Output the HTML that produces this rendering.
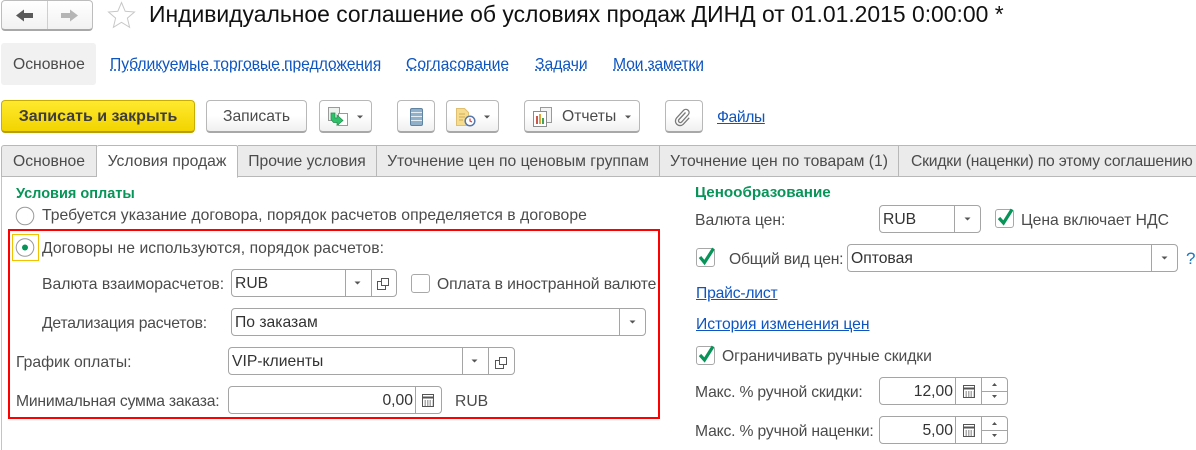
<!DOCTYPE html>
<html lang="ru"><head><meta charset="utf-8"><style>
html,body{margin:0;padding:0;background:#fff}
#p{position:relative;width:1196px;height:450px;overflow:hidden;background:#fff;font:15.7px/18px "Liberation Sans",sans-serif;color:#4b4b4b}
#p div,#p span.a{position:absolute;box-sizing:border-box;white-space:nowrap}
.t{line-height:18px;margin-top:1px}
.lk{color:#0f55c0;text-decoration:underline}
.dot{text-decoration:underline dotted #0f55c0}
.btn{background:linear-gradient(#fff,#fff 50%,#f0f0f0);border:1px solid #b8b8b8;border-bottom:2px solid #a8a8a8;border-radius:4px;height:33px;top:100px;text-align:center;line-height:32px}
.tab{top:145px;height:32px;background:#ebebeb;border:1px solid #b8b8b8;border-left:0;line-height:31px;text-align:center;color:#4b4b4b}
.f{background:#fff;border:1px solid #a5a5a5;border-radius:4px;height:28px;color:#333}
.v{left:3px;top:5px;line-height:18px;color:#333}
.d{top:0;bottom:0;width:1px;background:#a5a5a5}
.h{font-weight:bold;color:#079458;font-size:14.5px}
.cb{width:19px;height:19px;border:1px solid #a8a8a8;border-radius:3px;background:#fff}
svg{position:absolute;overflow:visible}
</style></head><body><div id="p">

<div style="left:1px;top:0;width:92px;height:31px;border:1px solid #bdbdbd;border-bottom:2px solid #a8a8a8;border-radius:4px;background:linear-gradient(#fff,#f2f2f2)"></div>
<div style="left:47px;top:1px;width:1px;height:28px;background:#cfcfcf"></div>
<svg style="left:0;top:0" width="140" height="32"><path d="M16 15.500l8-6v3.500h9v5h-9v3.500z" fill="#5a5a5a"/><path d="M78 15.500l-8-6v3.500h-9v5h9v3.500z" fill="#b5b5b5"/><path d="M121.500 2.500l3.700 8.800 9.300.7-7.100 6.100 2.200 9.200-8.100-5-8.100 5 2.200-9.200-7.100-6.100 9.300-.7z" fill="#fff" stroke="#c8c8c8" stroke-width="1"/></svg>
<div style="left:149px;top:0;line-height:29px;font-size:22.9px;color:#111">Индивидуальное соглашение об условиях продаж ДИНД от 01.01.2015 0:00:00 *</div>

<div style="left:1px;top:43px;width:95px;height:42px;background:#f1f1f1;border-radius:3px"></div>
<div class="t" style="left:13px;top:55px">Основное</div>
<div class="t lk dot" style="left:110px;top:55px;letter-spacing:-.06px">Публикуемые торговые предложения</div>
<div class="t lk dot" style="left:406px;top:55px">Согласование</div>
<div class="t lk dot" style="left:535px;top:55px">Задачи</div>
<div class="t lk dot" style="left:613px;top:55px;letter-spacing:-.18px">Мои заметки</div>

<div class="btn" style="left:1px;width:194px;background:linear-gradient(#ffe92e,#f2d400);border-color:#c9ae00;border-bottom-color:#b89f00;font-weight:bold;font-size:16px;color:#3d3d3d">Записать и закрыть</div>
<div class="btn" style="left:206px;width:101px">Записать</div>
<div class="btn" style="left:319px;width:53px"></div>
<div class="btn" style="left:397px;width:38px"></div>
<div class="btn" style="left:446px;width:53px"></div>
<div class="btn" style="left:524px;width:116px;text-align:left;padding-left:37px">Отчеты</div>
<div class="btn" style="left:665px;width:38px"></div>
<div class="t lk" style="left:717px;top:108px;letter-spacing:-.4px">Файлы</div>
<svg style="left:0;top:0" width="720" height="135">
<rect x="328.500" y="107.500" width="11" height="13" fill="#eef2ee" stroke="#9a9a9a"/><rect x="338.500" y="113.500" width="9" height="12" fill="#fff" stroke="#9a9a9a"/><path d="M331 113h4v5h2v-3l6 5.500-6 5v-3h-3.500l-2.500-3z" fill="#2fc06a" stroke="#1d8f4a" stroke-width=".7"/>
<path d="M357 115.500h6l-3 3zM484 115.500h6l-3 3zM625 115.500h6l-3 3z" fill="#555"/>
<rect x="410.500" y="108.500" width="12" height="17" rx="1.500" fill="#8fb0c8" stroke="#5f83a0"/><path d="M411 112.500h11M411 116.500h11M411 120.500h11" stroke="#e4edf3" stroke-width="1"/>
<path d="M456.500 108.500h8l4 4v13h-12z" fill="#f6dc8f" stroke="#e0c070"/><path d="M459 114h6M459 117h6M459 120h4" stroke="#d0ab55" stroke-width="1"/><circle cx="470" cy="121" r="4.800" fill="#fff" stroke="#5577aa" stroke-width="1.500"/><path d="M470 118.500v2.500l2 1" stroke="#d9363e" stroke-width="1.200" fill="none"/>
<rect x="540.500" y="107.500" width="11" height="15" fill="#f4f4f4" stroke="#9a9a9a"/><rect x="533.500" y="111.500" width="13" height="15" fill="#fff" stroke="#8c8c8c"/><path d="M536 124v-8h2v8z" fill="#c9574b"/><path d="M539 124v-10h2v10z" fill="#e0a63c"/><path d="M542 124v-6h2v6z" fill="#3fa55c"/>
<path d="M685.500 112.500l-6.500 7a1.800 1.800 0 0 0 2.600 2.500l6.800-7.500a3.200 3.200 0 0 0-4.600-4.400l-7.200 7.800a4.600 4.600 0 0 0 6.600 6.400l6-6.500" fill="none" stroke="#7a7a7a" stroke-width="1.300"/>
</svg>

<div style="left:1px;top:176px;width:1195px;height:1px;background:#b8b8b8"></div>
<div style="left:1px;top:176px;width:1px;height:274px;background:#c4c4c4"></div>
<div class="tab" style="left:1px;width:96px;border-left:1px solid #b8b8b8;border-radius:3px 0 0 0">Основное</div>
<div class="tab" style="left:97px;width:141px;background:#fff;border-bottom-color:#fff;height:33px;border-radius:2px 2px 0 0">Условия продаж</div>
<div class="tab" style="left:238px;width:139px">Прочие условия</div>
<div class="tab" style="left:377px;width:283px">Уточнение цен по ценовым группам</div>
<div class="tab" style="left:660px;width:239px">Уточнение цен по товарам (1)</div>
<div class="tab" style="left:899px;width:297px;border-right:0;text-align:left;padding-left:12px;letter-spacing:-.2px">Скидки (наценки) по этому соглашению</div>

<div class="t h" style="left:16px;top:184px">Условия оплаты</div>
<svg style="left:0;top:0" width="60" height="270"><circle cx="25" cy="216" r="8.800" fill="#fff" stroke="#9a9a9a"/><rect x="12.500" y="234.500" width="26" height="26" fill="none" stroke="#f2c200" stroke-width="1"/><circle cx="25" cy="247.500" r="8.800" fill="#fff" stroke="#9a9a9a"/><circle cx="25" cy="247.500" r="3" fill="#079458"/></svg>
<div class="t" style="left:42px;top:206px;letter-spacing:.06px">Требуется указание договора, порядок расчетов определяется в договоре</div>
<div style="left:8px;top:229px;width:652px;height:190px;border:2px solid #f00"></div>
<div class="t" style="left:42px;top:239px;letter-spacing:.07px">Договоры не используются, порядок расчетов:</div>

<div class="t" style="left:42px;top:275px">Валюта взаиморасчетов:</div>
<div class="f" style="left:231px;top:269px;width:166px"><div class="v">RUB</div><div class="d" style="left:113px"></div><div class="d" style="left:139px"></div></div>
<div class="cb" style="left:411px;top:274px"></div>
<div class="t" style="left:437px;top:275px;letter-spacing:-.1px">Оплата в иностранной валюте</div>

<div class="t" style="left:42px;top:314px;letter-spacing:-.19px">Детализация расчетов:</div>
<div class="f" style="left:231px;top:308px;width:415px"><div class="v">По заказам</div><div class="d" style="left:387px"></div></div>

<div class="t" style="left:16px;top:353px">График оплаты:</div>
<div class="f" style="left:228px;top:347px;width:287px"><div class="v">VIP-клиенты</div><div class="d" style="left:233px"></div><div class="d" style="left:259px"></div></div>

<div class="t" style="left:16px;top:392px;letter-spacing:-.2px">Минимальная сумма заказа:</div>
<div class="f" style="left:228px;top:386px;width:214px"><div class="v" style="left:auto;right:28px">0,00</div><div class="d" style="left:186px"></div></div>
<div class="t" style="left:455px;top:392px">RUB</div>

<div class="t h" style="left:695px;top:183px;font-size:15.2px">Ценообразование</div>
<div class="t" style="left:695px;top:211px">Валюта цен:</div>
<div class="f" style="left:879px;top:205px;width:102px"><div class="v">RUB</div><div class="d" style="left:74px"></div></div>
<div class="cb" style="left:995px;top:209px"></div>
<div class="t" style="left:1021px;top:211px">Цена включает НДС</div>
<div class="cb" style="left:696px;top:248px"></div>
<div class="t" style="left:729px;top:250px;letter-spacing:-.2px">Общий вид цен:</div>
<div class="f" style="left:847px;top:244px;width:331px"><div class="v">Оптовая</div><div class="d" style="left:303px"></div></div>
<div class="t" style="left:1186px;top:249px;color:#1c76c4;font-size:17px">?</div>
<div class="t lk" style="left:696px;top:284px;letter-spacing:-.2px">Прайс-лист</div>
<div class="t lk" style="left:696px;top:315px;letter-spacing:-.05px">История изменения цен</div>
<div class="cb" style="left:696px;top:346px"></div>
<div class="t" style="left:722px;top:347px;letter-spacing:-.08px">Ограничивать ручные скидки</div>
<div class="t" style="left:695px;top:383px;letter-spacing:-.18px">Макс. % ручной скидки:</div>
<div class="f" style="left:879px;top:377px;width:129px"><div class="v" style="left:auto;right:54px">12,00</div><div class="d" style="left:75px"></div><div class="d" style="left:101px"></div><div style="left:101px;right:0;top:13px;height:1px;background:#a5a5a5"></div></div>
<div class="t" style="left:695px;top:422px;letter-spacing:-.17px">Макс. % ручной наценки:</div>
<div class="f" style="left:879px;top:416px;width:129px"><div class="v" style="left:auto;right:54px">5,00</div><div class="d" style="left:75px"></div><div class="d" style="left:101px"></div><div style="left:101px;right:0;top:13px;height:1px;background:#a5a5a5"></div></div>

<svg style="left:0;top:0" width="1196" height="450">
<path d="M354.500 281.500h6l-3 3zM629.500 320.500h6l-3 3zM471.500 359.500h6l-3 3zM964.500 217.500h6l-3 3zM1161.500 256.500h6l-3 3z" fill="#555"/>
<g fill="none" stroke="#555" stroke-width="1"><path d="M381.500 278.500h7v7h-7zM381 281.500h-3.500v8h8v-4"/><path d="M499.500 357.500h7v7h-7zM499 360.500h-3.500v8h8v-4"/></g>
<path d="M992 386h5l-2.500-3zM992 395h5l-2.500 3zM992 425h5l-2.500-3zM992 434h5l-2.500 3z" fill="#555"/>
<g fill="#fff" stroke="#555"><rect x="422.500" y="394.500" width="11" height="12"/><path d="M423 397.500h10" stroke-width="2"/><path d="M424.500 401h8M424.500 403h8M424.500 405h8" stroke-dasharray="1.500 1" stroke-width="1"/></g>
<g fill="#fff" stroke="#555"><rect x="963.500" y="385.500" width="11" height="12"/><path d="M964 388.500h10" stroke-width="2"/><path d="M965.500 392h8M965.500 394h8M965.500 396h8" stroke-dasharray="1.500 1"/></g>
<g fill="#fff" stroke="#555"><rect x="963.500" y="424.500" width="11" height="12"/><path d="M964 427.500h10" stroke-width="2"/><path d="M965.500 431h8M965.500 433h8M965.500 435h8" stroke-dasharray="1.500 1"/></g>
<g fill="none" stroke="#079458" stroke-width="3.200"><path d="M999 218l4.500 5 8.500-13.500"/><path d="M700 257l4.500 5.500 9-14"/><path d="M700 355l4.500 5 8.500-13.500"/></g>
</svg>
</div></body></html>
